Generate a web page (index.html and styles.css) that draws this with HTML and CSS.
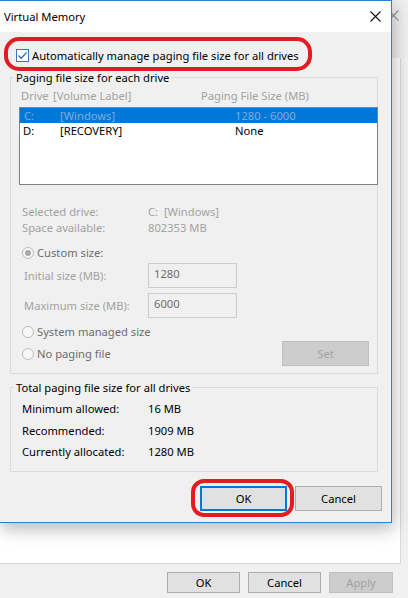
FILE: index.html
```html
<!DOCTYPE html>
<html lang="en">

<head>
  <meta charset="UTF-8">
  <meta name="viewport" content="width=device-width, initial-scale=1.0">
  <title>Virtual Memory</title>
  <link rel="stylesheet" href="styles.css">
</head>

<body>
  <!-- window behind the dialog -->
  <div class="back">
    <div class="back-title">
      <svg class="back-close" width="11" height="11" viewBox="0 0 11 11">
        <path d="M0.5 0.5 L10.5 10.5 M10.5 0.5 L0.5 10.5" stroke="#9a9a9a" stroke-width="1.1" fill="none" />
      </svg>
    </div>
    <div class="back-panel"></div>
    <div class="back-buttons">
      <span class="btn back-btn">OK</span>
      <span class="btn back-btn">Cancel</span>
      <span class="btn back-btn disabled apply">Apply</span>
    </div>
  </div>

  <!-- dialog -->
  <div class="dialog">
    <div class="titlebar">
      <span class="title">Virtual Memory</span>
      <svg class="close" width="11" height="11" viewBox="0 0 11 11">
        <path d="M0.5 0.5 L10.5 10.5 M10.5 0.5 L0.5 10.5" stroke="#111" stroke-width="1.1" fill="none" />
      </svg>
    </div>

    <div class="content">
      <div class="auto-row">
        <span class="checkbox">
          <svg width="11" height="11" viewBox="0 0 11 11">
            <path d="M1.5 5.5 L4.2 8.3 L9.6 2.4" stroke="#1f5fa8" stroke-width="1.2" fill="none" />
          </svg>
        </span>
        <span>Automatically manage paging file size for all drives</span>
      </div>

      <fieldset class="group group-drives">
        <legend>Paging file size for each drive</legend>
        <div class="list-head gray">
          <span class="h-drive">Drive</span><span class="h-label">[Volume Label]</span><span class="h-size">Paging File Size (MB)</span>
        </div>
        <div class="listbox">
          <div class="lrow selected">
            <span>C:</span><span>[Windows]</span><span>1280 - 6000</span>
          </div>
          <div class="lrow">
            <span class="d">D:</span><span>[RECOVERY]</span><span>None</span>
          </div>
        </div>

        <div class="info gray">
          <div class="info-row"><span class="info-key">Selected drive:</span><span>C:&nbsp; [Windows]</span></div>
          <div class="info-row"><span class="info-key">Space available:</span><span>802353 MB</span></div>
        </div>

        <div class="radio-row custom">
          <span class="radio checked"></span><span class="radio-text">Custom size:</span>
        </div>
        <div class="size-row first">
          <span class="size-key gray">Initial size (MB):</span>
          <span class="field">1280</span>
        </div>
        <div class="size-row">
          <span class="size-key gray">Maximum size (MB):</span>
          <span class="field">6000</span>
        </div>
        <div class="radio-row system">
          <span class="radio"></span><span class="radio-text">System managed size</span>
        </div>
        <div class="nopage-row">
          <div class="radio-row">
            <span class="radio"></span><span class="radio-text">No paging file</span>
          </div>
          <span class="btn disabled set">Set</span>
        </div>
      </fieldset>

      <fieldset class="group group-total">
        <legend>Total paging file size for all drives</legend>
        <div class="total-row"><span class="total-key">Minimum allowed:</span><span>16 MB</span></div>
        <div class="total-row"><span class="total-key">Recommended:</span><span>1909 MB</span></div>
        <div class="total-row"><span class="total-key">Currently allocated:</span><span>1280 MB</span></div>
      </fieldset>

      <div class="dialog-buttons">
        <span class="btn dlg-btn default">OK</span>
        <span class="btn dlg-btn">Cancel</span>
      </div>
    </div>

    <!-- red highlight marks -->
    <div class="mark mark-auto"></div>
    <div class="mark mark-ok"></div>
  </div>
</body>

</html>
```
FILE: styles.css
```css
* {
  box-sizing: border-box;
}

body {
  margin: 0;
  position: relative;
  width: 408px;
  height: 598px;
  overflow: hidden;
  background: #f0f0f0;
  font-family: 'Noto Sans', sans-serif;
  font-size: 11.2px;
  line-height: 15px;
  color: #000;
}

.gray {
  color: #a2a2a2;
}

.btn {
  display: flex;
  align-items: center;
  justify-content: center;
  background: #e1e1e1;
  border: 1px solid #adadad;
}

.btn.disabled {
  background: #cccccc;
  border-color: #bfbfbf;
  color: #a2a2a2;
}

/* background window */
.back-title {
  height: 58px;
  display: flex;
  justify-content: flex-end;
  padding: 10px 9px 0 0;
}

.back-panel {
  width: 401px;
  height: 506px;
  background: #fff;
  border-right: 1px solid #d9d9d9;
  border-bottom: 1px solid #d9d9d9;
}

.back-buttons {
  display: flex;
  justify-content: flex-end;
  gap: 8px;
  margin-top: 8px;
  padding-right: 15px;
}

.back-btn {
  width: 73px;
  height: 21px;
}

.back-btn.apply {
  width: 64px;
}

/* dialog */
.dialog {
  position: absolute;
  left: -1px;
  top: 0;
  width: 393px;
  height: 523px;
  border: 1px solid #2b7fcf;
  background: #f0f0f0;
  box-shadow: 2px 6px 16px rgba(0, 0, 0, 0.28);
}

.titlebar {
  height: 31px;
  background: #fff;
  display: flex;
  align-items: center;
  justify-content: space-between;
  padding: 0 10px 0 4px;
}

.title {
  margin-top: -1px;
}

.content {
  padding-top: 16px;
}

.auto-row {
  display: flex;
  align-items: center;
  height: 15px;
  padding-left: 16px;
}

.checkbox {
  width: 13px;
  height: 13px;
  margin-right: 3px;
  border: 1px solid #3a78bb;
  background: #fff;
  display: flex;
  align-items: center;
  justify-content: center;
}

.checkbox svg {
  display: block;
}

.group {
  margin: 0 0 0 10px;
  width: 368px;
  min-width: 0;
  padding: 0;
  border: 1px solid #dcdcdc;
}

.group legend {
  margin-left: 3px;
  padding: 0 2px;
  line-height: 15px;
}

.group-drives {
  margin-top: 7px;
  padding-top: 3px;
  padding-bottom: 7px;
}

.list-head {
  display: flex;
  padding-left: 10px;
}

.h-drive {
  width: 32px;
}

.h-label {
  width: 148px;
}

.listbox {
  margin: 4px 0 0 8px;
  width: 359px;
  height: 78px;
  border: 1px solid #828282;
  background: #fff;
}

.lrow {
  display: grid;
  grid-template-columns: 36px 175px 1fr;
  height: 15px;
  padding-left: 4px;
}

.lrow .d {
  margin-left: -1px;
}

.lrow.selected {
  background: #0078d7;
  color: #82abdc;
}

.info {
  margin-top: 19px;
}

.info-row {
  display: flex;
  height: 16px;
  padding-left: 11px;
}

.info-key {
  width: 126px;
}

.radio-row {
  display: flex;
  align-items: center;
  height: 15px;
  padding-left: 11px;
  color: #6d6d6d;
}

.radio {
  width: 12px;
  height: 12px;
  border: 1px solid #bcbcbc;
  border-radius: 50%;
  background: #f7f7f7;
  margin-right: 3px;
  display: flex;
  align-items: center;
  justify-content: center;
}

.radio.checked::after {
  content: '';
  width: 6px;
  height: 6px;
  border-radius: 50%;
  background: #a8a8a8;
}

.custom {
  margin-top: 9px;
}

.size-row {
  display: flex;
  align-items: center;
  margin-top: 5px;
  padding-left: 13px;
}

.size-row.first {
  margin-top: 3px;
}

.size-key {
  width: 124px;
}

.field {
  width: 89px;
  height: 25px;
  border: 1px solid #cccccc;
  color: #6d6d6d;
  padding: 2px 0 0 5px;
}

.system {
  margin-top: 6px;
}

.nopage-row {
  display: flex;
  align-items: center;
  justify-content: space-between;
  margin-top: 2px;
  padding-right: 8px;
}

.set {
  width: 87px;
  height: 25px;
}

.group-total {
  margin-top: 6px;
  padding-top: 3px;
  padding-bottom: 8px;
}

.total-row {
  display: flex;
  align-items: center;
  height: 21.5px;
  padding-left: 11px;
}

.total-key {
  width: 126px;
}

.dialog-buttons {
  display: flex;
  justify-content: flex-end;
  gap: 8px;
  margin-top: 14px;
  padding-right: 9px;
}

.dlg-btn {
  width: 87px;
  height: 25px;
}

.dlg-btn.default {
  border: 2px solid #0078d7;
}

.mark {
  position: absolute;
  border: 4px solid #e31b23;
  border-radius: 15px;
}

.mark-auto {
  left: 4px;
  top: 36px;
  width: 308px;
  height: 34px;
}

.mark-ok {
  left: 191px;
  top: 478px;
  width: 103px;
  height: 38px;
  border-radius: 13px;
}
```
